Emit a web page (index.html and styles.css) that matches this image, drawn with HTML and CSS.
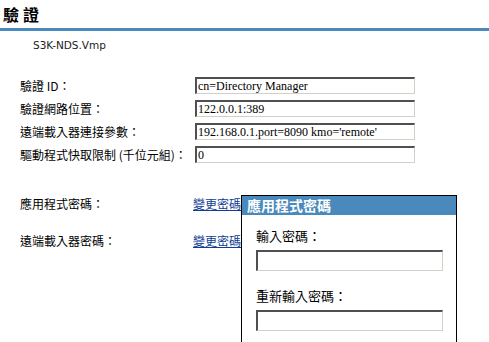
FILE: index.html
```html
<!DOCTYPE html>
<html lang="zh-Hant">
<head>
    <meta charset="UTF-8">
    <meta name="viewport" content="width=device-width, initial-scale=1.0">
    <title>驗證</title>
    <link rel="stylesheet" href="styles.css">
</head>
<body>
    <h1 class="page-title">驗證</h1>

    <div class="content">
        <div class="driver-name">S3K-NDS.Vmp</div>

        <div class="form-grid">
            <label for="authId">驗證 ID：</label>
            <input type="text" id="authId" value="cn=Directory Manager">

            <label for="authContext">驗證網路位置：</label>
            <input type="text" id="authContext" value="122.0.0.1:389">

            <label for="remoteParams">遠端載入器連接參數：</label>
            <input type="text" id="remoteParams" value="192.168.0.1.port=8090 kmo='remote'">

            <label for="cacheLimit">驅動程式快取限制 (千位元組)：</label>
            <input type="text" id="cacheLimit" value="0">
        </div>

        <div class="pw-grid">
            <span>應用程式密碼：</span>
            <a href="#">變更密碼</a>

            <span>遠端載入器密碼：</span>
            <a href="#">變更密碼</a>
        </div>
    </div>

    <div class="pw-dialog">
        <div class="pw-dialog-title">應用程式密碼</div>
        <div class="pw-dialog-body">
            <label for="pw1">輸入密碼：</label>
            <input type="password" id="pw1">
            <label for="pw2" class="second">重新輸入密碼：</label>
            <input type="password" id="pw2">
        </div>
    </div>
</body>
</html>
```

FILE: styles.css
```css
* {
    margin: 0;
    padding: 0;
    box-sizing: border-box;
}

html, body {
    height: 100%;
    overflow: hidden;
}

body {
    background-color: #fff;
    color: #000;
    font-family: "Noto Sans CJK TC", "DejaVu Sans", sans-serif;
    font-size: 12px;
}

.page-title {
    padding-left: 3px;
    font-size: 16px;
    font-weight: bold;
    letter-spacing: 4px;
    line-height: 28px;
    border-bottom: 3px solid #4a89bb;
}

.content {
    padding-left: 20px;
}

.driver-name {
    padding: 7px 0 0 13px;
    font-family: "DejaVu Sans", sans-serif;
    font-size: 10.5px;
    line-height: 14px;
    color: #222;
}

.form-grid {
    margin-top: 25px;
    display: grid;
    grid-template-columns: 175px 220px;
    row-gap: 6px;
    align-items: center;
}

.form-grid label {
    line-height: 16px;
    white-space: nowrap;
}

.form-grid input {
    height: 17px;
    width: 220px;
    padding: 0 1px;
    font-family: "Liberation Serif", serif;
    font-size: 12px;
    color: #000;
    background: #fff;
    border-top: 2px solid #505050;
    border-left: 2px solid #505050;
    border-right: 1px solid #d4d0c8;
    border-bottom: 1px solid #d4d0c8;
    outline: none;
}

.pw-grid {
    margin-top: 33px;
    display: grid;
    grid-template-columns: 173px auto;
    row-gap: 21px;
    line-height: 16px;
}

.pw-grid a {
    justify-self: start;
    color: #123d94;
    text-decoration: underline;
}

/* popup that lies over the form; it runs on past the bottom of the frame */
.pw-dialog {
    position: absolute;
    left: 241px;
    top: 195px;
    bottom: 0;
    width: 216px;
    background: #fff;
    border: 1px solid #000;
    border-bottom: none;
}

.pw-dialog-title {
    height: 19px;
    line-height: 19px;
    padding-left: 5px;
    background-color: #4a89bb;
    color: #fff;
    font-size: 14px;
    font-weight: bold;
}

.pw-dialog-body {
    padding: 13px 0 0 14px;
}

.pw-dialog-body label {
    display: block;
    font-size: 13px;
    line-height: 16px;
    margin-bottom: 6px;
}

.pw-dialog-body label.second {
    margin-top: 17px;
}

.pw-dialog-body input {
    display: block;
    width: 187px;
    height: 21px;
    background: #fff;
    border-top: 2px solid #505050;
    border-left: 2px solid #505050;
    border-right: 1px solid #d4d0c8;
    border-bottom: 1px solid #d4d0c8;
    outline: none;
}
```
